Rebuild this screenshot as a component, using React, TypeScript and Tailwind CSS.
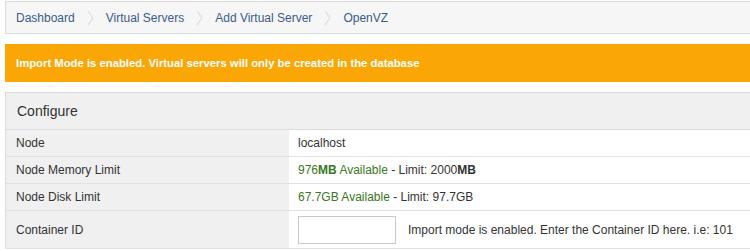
import type { ReactNode } from "react";

type Row = {
  label: string;
  value: ReactNode;
  tall?: boolean;
};

function Chevron() {
  return (
    <svg width="7" height="16" viewBox="0 0 7 16" className="mx-[12px] shrink-0">
      <path d="M1 1 L6 8 L1 15" fill="none" stroke="#d6d6d6" strokeWidth="1" />
    </svg>
  );
}

const crumbs = ["Dashboard", "Virtual Servers", "Add Virtual Server", "OpenVZ"];

const rows: Row[] = [
  { label: "Node", value: <span className="text-[#333]">localhost</span> },
  {
    label: "Node Memory Limit",
    value: (
      <span className="text-[#333]">
        <span className="text-[#3a7625]">
          976<b>MB</b> Available
        </span>{" "}
        - Limit: 2000<b>MB</b>
      </span>
    ),
  },
  {
    label: "Node Disk Limit",
    value: (
      <span className="text-[#333]">
        <span className="text-[#3a7625]">67.7GB Available</span> - Limit: 97.7GB
      </span>
    ),
  },
  {
    label: "Container ID",
    tall: true,
    value: (
      <div className="flex items-center">
        <input className="h-[28px] w-[98px] border border-[#c8c8c8] bg-white outline-none" />
        <span className="ml-[12px] text-[#333]">
          Import mode is enabled. Enter the Container ID here. i.e: 101
        </span>
      </div>
    ),
  },
];

export default function App() {
  return (
    <div className="h-[251px] w-[750px] overflow-hidden bg-white font-['Liberation_Sans',Arial,sans-serif]">
      <div className="w-[780px] pl-[5px] pt-px">
        <nav className="flex h-[33px] items-center border border-[#dcdcdc] bg-[#f6f6f6] pl-[10px] text-[12px] text-[#3b5b8c]">
          {crumbs.map((crumb, i) => (
            <div key={crumb} className="flex items-center">
              {i > 0 ? <Chevron /> : null}
              <span>{crumb}</span>
            </div>
          ))}
        </nav>

        <div className="mt-[10px] flex h-[38px] items-center bg-[#faa604] pl-[11px] text-[11.3px] font-bold text-white">
          Import Mode is enabled. Virtual servers will only be created in the database
        </div>

        <div className="mt-[10px] border-t border-l border-[#dcdcdc]">
          <div className="flex h-[37px] items-center border-b border-[#dcdcdc] bg-[#f0f0f0] pl-[11px] text-[14px] text-[#333]">
            Configure
          </div>
          {rows.map((row) => (
            <div
              key={row.label}
              className={`flex border-b border-[#e2e2e2] text-[12px] ${row.tall ? "h-[38px]" : "h-[27px]"}`}
            >
              <div className="flex w-[283px] shrink-0 items-center bg-[#f0f0f0] pl-[10px] text-[#333]">
                {row.label}
              </div>
              <div className="flex flex-1 items-center bg-white pl-[9px]">{row.value}</div>
            </div>
          ))}
        </div>
      </div>
    </div>
  );
}
